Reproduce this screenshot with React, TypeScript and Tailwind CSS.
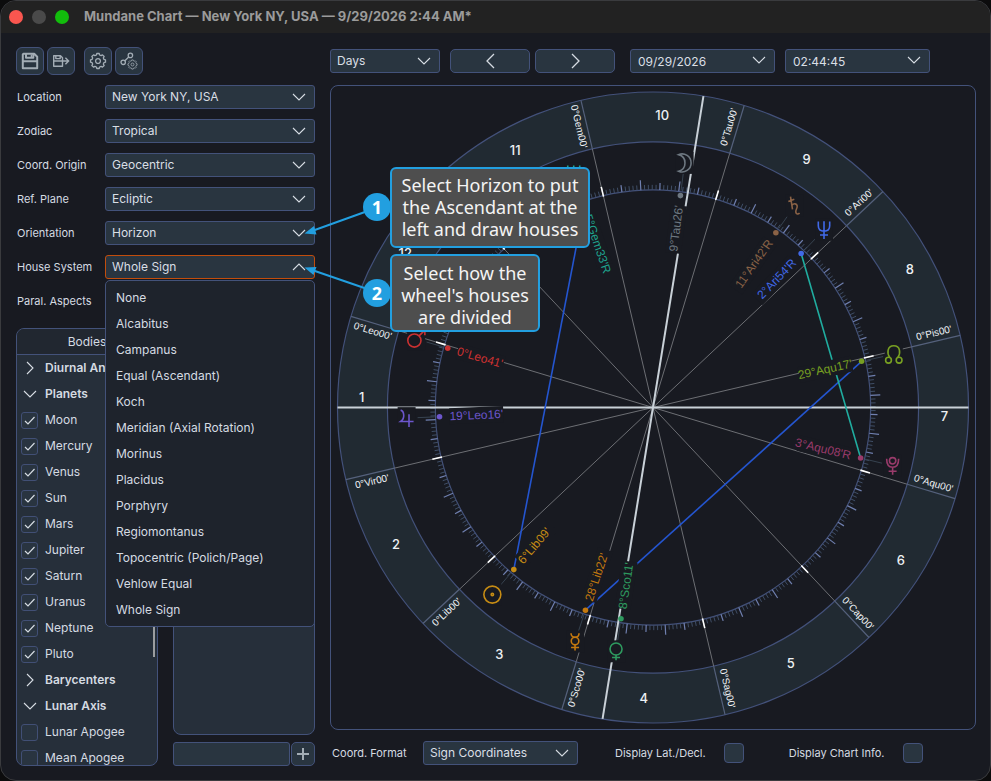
import type { ReactNode } from 'react'

const SETTINGS = [
  { id: 'location', label: 'Location', value: 'New York NY, USA' },
  { id: 'zodiac', label: 'Zodiac', value: 'Tropical' },
  { id: 'origin', label: 'Coord. Origin', value: 'Geocentric' },
  { id: 'plane', label: 'Ref. Plane', value: 'Ecliptic' },
  { id: 'orientation', label: 'Orientation', value: 'Horizon' },
]

const HOUSE_SYSTEMS = [
  'None',
  'Alcabitus',
  'Campanus',
  'Equal (Ascendant)',
  'Koch',
  'Meridian (Axial Rotation)',
  'Morinus',
  'Placidus',
  'Porphyry',
  'Regiomontanus',
  'Topocentric (Polich/Page)',
  'Vehlow Equal',
  'Whole Sign',
]

const BODY_GROUPS = [
  { name: 'Diurnal An', open: false, checked: false, items: [] },
  {
    name: 'Planets',
    open: true,
    checked: true,
    items: ['Moon', 'Mercury', 'Venus', 'Sun', 'Mars', 'Jupiter', 'Saturn', 'Uranus', 'Neptune', 'Pluto'],
  },
  { name: 'Barycenters', open: false, checked: false, items: [] },
  { name: 'Lunar Axis', open: true, checked: false, items: ['Lunar Apogee', 'Mean Apogee'] },
]

/* ---------- Wheel ---------- */

const ASC = 136.8
const MC_ANGLE = 80.8
const R_OUTER = 316
const R_RING = 266
const R_TICKS = 218
const R_DOT = 214
const R_LABEL = 204
const R_GLYPH = 247

const SIGNS = ['Ari', 'Tau', 'Gem', 'Can', 'Leo', 'Vir', 'Lib', 'Sco', 'Sag', 'Cap', 'Aqu', 'Pis']

interface Planet {
  id: string
  lon: number
  label: string
  color: string
  glyph: ReactNode
}

const PLANETS: Planet[] = [
  {
    id: 'moon',
    lon: 39.43,
    label: "9°Tau26'",
    color: '#6d7780',
    glyph: <path d="M-6-8.3A9 9 0 1 1-6 8.3A8.6 8.6 0 0 0-6-8.3z" />,
  },
  {
    id: 'saturn',
    lon: 11.7,
    label: "11°Ari42'R",
    color: '#8a6246',
    glyph: <path d="M-4.3-9L-2.3 3.6M-6.5-4.2L-.5-6.4M-2.9-.4C-1-2.6 2-2.4 2.4.2C2.7 2.6.6 4 1 6.4C1.3 8.6 3.4 8.9 4.8 7.2" />,
  },
  {
    id: 'neptune',
    lon: 2.9,
    label: "2°Ari54'R",
    color: '#4169e8',
    glyph: <path d="M-5.7-8.3V-4C-5.7-.5-3.5 1.4 0 1.4S5.7-.5 5.7-4V-8.3M0-8.5V9.2M-4 5.2H4" />,
  },
  {
    id: 'node',
    lon: 329.28,
    label: "29°Aqu17'",
    color: '#78a022',
    glyph: (
      <>
        <path d="M-4 3.2C-7-.5-6.8-8.4 0-8.4S7-.5 4 3.2" />
        <circle cx="-5.3" cy="6" r="2.9" />
        <circle cx="5.3" cy="6" r="2.9" />
      </>
    ),
  },
  {
    id: 'pluto',
    lon: 303.13,
    label: "3°Aqu08'R",
    color: '#9a3b6b',
    glyph: (
      <>
        <circle cx="0" cy="-5" r="3.2" />
        <path d="M-6-7C-6-1-4 1.5 0 1.5S6-1 6-7M0 1.5V9M-4 5.5H4" />
      </>
    ),
  },
  {
    id: 'mercury',
    lon: 208.37,
    label: "28°Lib22'",
    color: '#c4790f',
    glyph: (
      <>
        <circle cx="0" cy="-.5" r="3.8" />
        <path d="M-4-8.3C-4-5.5-2.4-4.3 0-4.3S4-5.5 4-8.3M0 3.3V9M-4 6H4" />
      </>
    ),
  },
  {
    id: 'venus',
    lon: 218.18,
    label: "8°Sco11'",
    color: '#2e9a5f',
    glyph: (
      <>
        <circle cx="0" cy="-2.3" r="6" />
        <path d="M0 3.7V9M-4 6.2H4" />
      </>
    ),
  },
  {
    id: 'sun',
    lon: 186.15,
    label: "6°Lib09'",
    color: '#c68c14',
    glyph: (
      <>
        <circle cx="0" cy="0" r="8.5" />
        <circle cx="0" cy="0" r="1.2" />
      </>
    ),
  },
  {
    id: 'jupiter',
    lon: 139.27,
    label: "19°Leo16'",
    color: '#6c56cc',
    glyph: <path d="M-6-8C-2.5-7-1.2 0-6 3.4H7M2.4-3.8V8.8" />,
  },
  {
    id: 'mars',
    lon: 120.68,
    label: "0°Leo41'",
    color: '#cb3131',
    glyph: (
      <>
        <circle cx="-1.7" cy="1.5" r="6.6" />
        <path d="M3-3.2L8-8.2M3.5-9H8.8V-3.7" />
      </>
    ),
  },
  {
    id: 'uranus',
    lon: 65.55,
    label: "5°Gem33'R",
    color: '#1fa58f',
    glyph: (
      <>
        <path d="M-6-8.5V0M6-8.5V0M-6-4.2H6M0-8.5V4" />
        <circle cx="0" cy="6.5" r="2.5" />
      </>
    ),
  },
]

const ASPECTS = [
  { from: 'sun', to: 'uranus', color: '#2455cf' },
  { from: 'mercury', to: 'node', color: '#2455cf' },
  { from: 'neptune', to: 'pluto', color: '#20ada0' },
]

// zodiac longitude to wheel angle, counterclockwise from the right
const toAngle = (lon: number) => (((180 + lon - ASC) % 360) + 360) % 360

const polar = (r: number, deg: number) => {
  const a = (deg * Math.PI) / 180
  return { x: r * Math.cos(a), y: -r * Math.sin(a) }
}

const isLeft = (deg: number) => Math.cos((deg * Math.PI) / 180) < 0

function Ray({ angle, from, to, color, width = 1 }: { angle: number; from: number; to: number; color: string; width?: number }) {
  const a = polar(from, angle)
  const b = polar(to, angle)
  return <line x1={a.x} y1={a.y} x2={b.x} y2={b.y} stroke={color} strokeWidth={width} />
}

function PlanetMark({ planet }: { planet: Planet }) {
  const angle = toAngle(planet.lon)
  const left = isLeft(angle)
  const dot = polar(R_DOT, angle)
  const label = polar(R_LABEL, angle)
  const glyph = polar(R_GLYPH, angle)
  const width = planet.label.length * 6
  return (
    <g>
      <g transform={`translate(${label.x} ${label.y}) rotate(${left ? 180 - angle : -angle})`}>
        <rect x={left ? 0 : -width} y="-8" width={width} height="16" fill="#181a21" />
        <text y="4" fontSize="12" textAnchor={left ? 'start' : 'end'} fill={planet.color}>
          {planet.label}
        </text>
      </g>
      <Ray angle={angle} from={R_TICKS + 1} to={R_TICKS + 18} color="#36424f" />
      <circle cx={dot.x} cy={dot.y} r="2.8" fill={planet.color} />
      <g transform={`translate(${glyph.x} ${glyph.y})`} fill="none" stroke={planet.color} strokeWidth="1.6">
        <rect x="-9" y="-11" width="18" height="22" fill="#181a21" stroke="none" />
        {planet.glyph}
      </g>
    </g>
  )
}

function Wheel() {
  return (
    <svg viewBox="-322 -322 644 644" className="size-full font-['Liberation_Sans',Arial,sans-serif]" role="img" aria-label="Mundane chart wheel">
      <circle r={(R_OUTER + R_RING) / 2} fill="none" stroke="#212a32" strokeWidth={R_OUTER - R_RING} />
      <circle r={R_OUTER} fill="none" stroke="#43517a" strokeWidth="1.2" />
      <circle r={R_RING} fill="none" stroke="#43517a" strokeWidth="1.2" />
      <circle r={R_TICKS} fill="none" stroke="#43517a" strokeWidth="1.2" />

      {SIGNS.map((sign, i) => {
        const angle = toAngle(i * 30)
        return (
          <g key={sign}>
            <Ray angle={angle} from={0} to={R_RING} color="#6c6e73" />
            <Ray angle={angle} from={R_RING} to={R_OUTER} color="#55617c" width={1.2} />
          </g>
        )
      })}
      {Array.from({ length: 360 }, (_, deg) => {
        if (deg % 30 === 0) return null
        const long = deg % 10 === 0
        const major = deg % 5 === 0
        return (
          <Ray
            key={deg}
            angle={toAngle(deg)}
            from={R_TICKS}
            to={R_TICKS + (long ? 10 : major ? 7 : 5)}
            color={major ? '#7080b0' : '#3f4e66'}
            width={major ? 1.2 : 1}
          />
        )
      })}

      <Ray angle={0} from={-R_OUTER} to={R_OUTER} color="#c9d1d8" width={2} />
      <Ray angle={MC_ANGLE} from={-R_OUTER} to={R_OUTER} color="#c9d1d8" width={2} />
      {SIGNS.map((sign, i) => (
        <Ray key={sign} angle={toAngle(i * 30)} from={R_TICKS - 1} to={R_TICKS + 9} color="#ffffff" width={1.6} />
      ))}

      {ASPECTS.map((aspect) => {
        const from = PLANETS.find((p) => p.id === aspect.from)!
        const to = PLANETS.find((p) => p.id === aspect.to)!
        const a = polar(R_DOT, toAngle(from.lon))
        const b = polar(R_DOT, toAngle(to.lon))
        return <line key={aspect.from} x1={a.x} y1={a.y} x2={b.x} y2={b.y} stroke={aspect.color} strokeWidth="1.6" />
      })}
      {PLANETS.map((planet) => (
        <PlanetMark key={planet.id} planet={planet} />
      ))}

      {SIGNS.map((sign, i) => {
        const angle = toAngle(i * 30)
        const p = polar(291, angle + 1.6)
        return (
          <text
            key={sign}
            y="3"
            fontSize="10"
            textAnchor="middle"
            fill="#f0f3f6"
            transform={`translate(${p.x} ${p.y}) rotate(${isLeft(angle) ? 180 - angle : -angle})`}
          >
            {`0°${sign}00'`}
          </text>
        )
      })}
      {Array.from({ length: 12 }, (_, i) => {
        const p = polar(292, 178.2 + i * 30)
        return (
          <text
            key={i}
            x={p.x}
            y={p.y + 4}
            textAnchor="middle"
            fill="#eef1f4"
            className="font-['Inter',sans-serif] text-[13px] font-medium"
          >
            {i + 1}
          </text>
        )
      })}
    </svg>
  )
}

/* ---------- Controls ---------- */

function Chevron({ className = '' }: { className?: string }) {
  return (
    <svg viewBox="0 0 14 8" className={`h-2 w-3.5 shrink-0 ${className}`} fill="none" stroke="#d5dbe2" strokeWidth="1.1" aria-hidden="true">
      <path d="M1 1l6 6 6-6" />
    </svg>
  )
}

function Select({ id, value, label, className = '', active = false }: { id: string; value: string; label?: string; className?: string; active?: boolean }) {
  return (
    <div className={`relative h-6 ${className}`}>
      <select
        id={id}
        aria-label={label}
        defaultValue={value}
        className={`block size-full appearance-none rounded-[3px] border bg-[#293540] pr-7 pl-1.5 text-[12px] leading-5 text-[#d9dfe5] outline-none ${
          active ? 'border-[#c24d0c]' : 'border-[#43527a]'
        }`}
      >
        <option>{value}</option>
      </select>
      <Chevron className={`pointer-events-none absolute top-2 right-[9px] ${active ? 'rotate-180' : ''}`} />
    </div>
  )
}

function PickerInput({ label, value }: { label: string; value: string }) {
  return (
    <div className="relative h-6 w-[145px]">
      <input
        type="text"
        aria-label={label}
        defaultValue={value}
        className="block size-full rounded-[3px] border border-[#43527a] bg-[#293540] pr-7 pl-[7px] text-[12px] text-[#d9dfe5] outline-none"
      />
      <button type="button" aria-label={`Pick ${label}`} className="absolute top-[7px] right-[9px] flex">
        <Chevron />
      </button>
    </div>
  )
}

function IconButton({ label, className = 'size-7 rounded-md', children }: { label: string; className?: string; children: ReactNode }) {
  return (
    <button
      type="button"
      aria-label={label}
      className={`flex shrink-0 items-center justify-center border border-[#43527a] bg-[#293540] ${className}`}
    >
      {children}
    </button>
  )
}

function Gear({ className }: { className: string }) {
  const teeth = Array.from({ length: 8 }, (_, i) => {
    const points = [
      [6.2, -15],
      [7.6, -9],
      [7.6, 9],
      [6.2, 15],
    ]
    return points
      .map(([r, offset]) => {
        const p = polar(r, i * 45 + offset)
        return `${p.x.toFixed(2)} ${p.y.toFixed(2)}`
      })
      .join('L')
  })
  return (
    <svg viewBox="-9 -9 18 18" className={className} fill="none" stroke="#a3adb5" strokeWidth="1.3" strokeLinejoin="round">
      <path d={`M${teeth.join('L')}Z`} />
      <circle r="2.4" />
    </svg>
  )
}

function Toolbar() {
  return (
    <div className="flex h-7 gap-[3px]">
      <IconButton label="Save">
        <svg viewBox="0 0 18 18" className="size-[18px]" fill="none" stroke="#a3adb5" strokeWidth="2">
          <path d="M2.5 1.8h10.7l3 3v11.4H1.8V2.5zM1.8 9.3h14.4M5 2v3.7h7.3V2" strokeLinejoin="round" />
          <path d="M10.4 2.5v2.4" strokeWidth="1.4" />
        </svg>
      </IconButton>
      <IconButton label="Save as">
        <svg viewBox="0 0 18 14" className="h-3.5 w-[18px]" fill="none" stroke="#a3adb5" strokeWidth="1.4">
          <path d="M1.7 1.8h6.8l2 2v8.4H1.7zM1.7 7h8.8M3.8 2v2.6h4.4V2" strokeLinejoin="round" />
          <path d="M10 7h6.3M13.4 3.7L16.6 7l-3.2 3.3" />
        </svg>
      </IconButton>
      <div className="ml-1.5 flex gap-[3px]">
        <IconButton label="Settings">
          <Gear className="size-[18px]" />
        </IconButton>
        <IconButton label="Aspect settings">
          <span className="relative flex size-[18px]">
            <svg viewBox="0 0 18 18" className="size-[18px]" fill="none" stroke="#a3adb5" strokeWidth="1.3">
              <circle cx="3.2" cy="10.3" r="2.2" />
              <circle cx="10.4" cy="3.4" r="2.2" />
              <path d="M4.9 8.7L8.700 5" />
            </svg>
            <Gear className="absolute top-[7px] left-[7px] size-[11px]" />
          </span>
        </IconButton>
      </div>
    </div>
  )
}

function BodyRow({ name, checked }: { name: string; checked: boolean }) {
  return (
    <li className="h-[26px]">
      <label className="flex h-full items-center gap-[7px] pl-1">
        <span className="relative flex size-[17px]">
          <input
            type="checkbox"
            defaultChecked={checked}
            className="peer size-full appearance-none rounded-[3px] border border-[#414f75] bg-[#293440]"
          />
          <svg
            viewBox="0 0 17 17"
            className="pointer-events-none absolute inset-0 hidden peer-checked:block"
            fill="none"
            stroke="#d5dbe2"
            strokeWidth="1.2"
          >
            <path d="M4 9l3 3 6.500-7" />
          </svg>
        </span>
        {name}
      </label>
    </li>
  )
}

function BodiesPanel() {
  return (
    <section className="relative flex w-[142px] flex-col overflow-hidden rounded-lg border border-[#43527a] bg-[#262f3a] text-[12px]">
      <h2 className="flex h-[26px] shrink-0 items-center justify-center border-b border-[#43527a] bg-[#212730]">Bodies</h2>
      <div className="min-h-0 flex-1 overflow-hidden">
        {BODY_GROUPS.map((group) => (
          <div key={group.name}>
            <button type="button" className="flex h-[26px] items-center gap-2 pl-1.5 font-semibold whitespace-nowrap">
              <Chevron className={group.open ? '' : '-rotate-90'} />
              {group.name}
            </button>
            <ul>
              {group.items.map((item) => (
                <BodyRow key={item} name={item} checked={group.checked} />
              ))}
            </ul>
          </div>
        ))}
      </div>
      <div className="absolute top-7 right-0.5 h-[300px] w-0.5 bg-[#9b9d9f]" />
    </section>
  )
}

function SettingRow({ id, label, children }: { id: string; label: string; children: ReactNode }) {
  return (
    <div className="relative flex h-6 items-center">
      <label htmlFor={id} className="w-[89px] shrink-0 pl-px text-[11px]">
        {label}
      </label>
      {children}
    </div>
  )
}

function Sidebar() {
  return (
    <aside className="flex w-[299px] shrink-0 flex-col">
      <Toolbar />
      <div className="mt-2.5 flex flex-col gap-2.5">
        {SETTINGS.map((s) => (
          <SettingRow key={s.id} id={s.id} label={s.label}>
            <Select id={s.id} value={s.value} className="flex-1" />
          </SettingRow>
        ))}
        <SettingRow id="house" label="House System">
          <Select id="house" value="Whole Sign" className="flex-1" active />
          <ul
            role="listbox"
            aria-label="House System"
            className="absolute top-[25px] right-0 z-10 w-[210px] rounded-[5px] border border-[#43527a] bg-[#1e232c] pt-1 pb-[3px] text-[12px]"
          >
            {HOUSE_SYSTEMS.map((name) => (
              <li key={name} role="option" aria-selected={name === 'Whole Sign'} className="flex h-[26px] items-center pl-2.5">
                {name}
              </li>
            ))}
          </ul>
        </SettingRow>
        <SettingRow id="parallels" label="Paral. Aspects">
          <Select id="parallels" value="None" className="flex-1" />
        </SettingRow>
      </div>
      <div className="mt-[15px] flex min-h-0 flex-1 justify-between">
        <BodiesPanel />
        <div className="flex w-[142px] flex-col gap-[7px]">
          <div className="flex-1 rounded-lg border border-[#43527a] bg-[#262f3a]" />
          <div className="flex gap-px">
            <input aria-label="Custom body" className="h-6 min-w-0 flex-1 rounded-[3px] border border-[#43527a] bg-[#293540] px-1.5 text-[12px]" />
            <IconButton label="Add" className="size-6 rounded-[5px]">
              <svg viewBox="0 0 12 12" className="size-3" stroke="#a3adb5" strokeWidth="2">
                <path d="M6 0v12M0 6h12" />
              </svg>
            </IconButton>
          </div>
        </div>
      </div>
    </aside>
  )
}

function TimeControls() {
  return (
    <div className="flex h-7 items-center">
      <Select id="step" label="Step" value="Days" className="w-[110px]" />
      <div className="ml-2.5 flex gap-[5px]">
        <IconButton label="Previous" className="h-6 w-20 rounded-[5px]">
          <svg viewBox="0 0 9 16" className="h-4 w-[9px]" fill="none" stroke="#d5dbe2" strokeWidth="1.3">
            <path d="M8 1L1 8l7 7" />
          </svg>
        </IconButton>
        <IconButton label="Next" className="h-6 w-20 rounded-[5px]">
          <svg viewBox="0 0 9 16" className="h-4 w-[9px]" fill="none" stroke="#d5dbe2" strokeWidth="1.3">
            <path d="M1 1l7 7-7 7" />
          </svg>
        </IconButton>
      </div>
      <div className="ml-[15px] flex gap-2.5">
        <PickerInput label="date" value="09/29/2026" />
        <PickerInput label="time" value="02:44:45" />
      </div>
    </div>
  )
}

function DisplayToggle({ label, className }: { label: string; className: string }) {
  return (
    <label className={`flex items-center gap-[18px] whitespace-nowrap ${className}`}>
      {label}
      <input type="checkbox" className="size-5 appearance-none rounded border border-[#43527a] bg-[#293540]" />
    </label>
  )
}

function Callout({ step, text, className, badgeClass }: { step: number; text: string; className: string; badgeClass: string }) {
  return (
    <div className={`absolute z-20 rounded-md border-2 border-[#229fe0] bg-[#4e4e4e] text-center text-[#f4f4f4] ${className}`}>
      <span className={`absolute -left-[29px] flex size-7 items-center justify-center rounded-full bg-[#229fe0] font-bold text-white ${badgeClass}`}>
        {step}
      </span>
      {text}
    </div>
  )
}

export default function App() {
  return (
    <div className="h-screen bg-[#0c0c0d] font-['Inter',sans-serif] text-[#d5dbe2]">
      <div className="relative flex h-full flex-col overflow-hidden rounded-2xl border border-[#3a3b3e] bg-[#181a21]">
        <header className="flex h-8 shrink-0 items-center bg-[#222222] pl-2">
          <div className="flex gap-[9px]">
            <span className="size-3.5 rounded-full bg-[#f9564f]" />
            <span className="size-3.5 rounded-full bg-[#4a4a4a]" />
            <span className="size-3.5 rounded-full bg-[#12bd0c]" />
          </div>
          <h1 className="ml-[15px] text-[13px] font-bold text-[#9b9b9b]">Mundane Chart — New York NY, USA — 9/29/2026 2:44 AM*</h1>
        </header>

        <div className="flex min-h-0 flex-1 gap-[15px] pt-3.5 pr-3.5 pb-3.5 pl-[15px]">
          <Sidebar />
          <main className="flex min-w-0 flex-1 flex-col pb-px">
            <TimeControls />
            <div className="mt-2.5 min-h-0 flex-1 rounded-lg border border-[#43527a]">
              <Wheel />
            </div>
            <div className="mt-[11px] flex h-6 items-center pl-0.5 text-[11px]">
              <label htmlFor="format" className="w-[91px] shrink-0 whitespace-nowrap">
                Coord. Format
              </label>
              <Select id="format" value="Sign Coordinates" className="w-[155px]" />
              <DisplayToggle label="Display Lat./Decl." className="ml-[37px]" />
              <DisplayToggle label="Display Chart Info." className="ml-[45px]" />
            </div>
          </main>
        </div>

        {/* Walkthrough hints */}
        <div className="pointer-events-none absolute inset-0 font-['Noto_Sans','Open_Sans',sans-serif] text-[18px] leading-[22px]">
          <svg viewBox="304 200 80 100" className="absolute top-[199px] left-[303px] z-20 h-[100px] w-20" fill="#229fe0" stroke="#229fe0">
            <path d="M376 208L312 231M376 292L312 270" strokeWidth="2" />
            <path d="M304.500 233.500L314 226L316.500 234.500zM304.500 267.500L316.500 267L313.500 275z" stroke="none" />
          </svg>
          <Callout
            step={1}
            text="Select Horizon to put the Ascendant at the left and draw houses"
            className="top-[166px] left-[389px] w-[200px] px-1 pt-[5px] pb-1.5"
            badgeClass="top-6"
          />
          <Callout
            step={2}
            text="Select how the wheel's houses are divided"
            className="top-[253px] left-[389px] w-[150px] px-1 pt-1.5 pb-0.5"
            badgeClass="top-[23px]"
          />
        </div>
      </div>
    </div>
  )
}
